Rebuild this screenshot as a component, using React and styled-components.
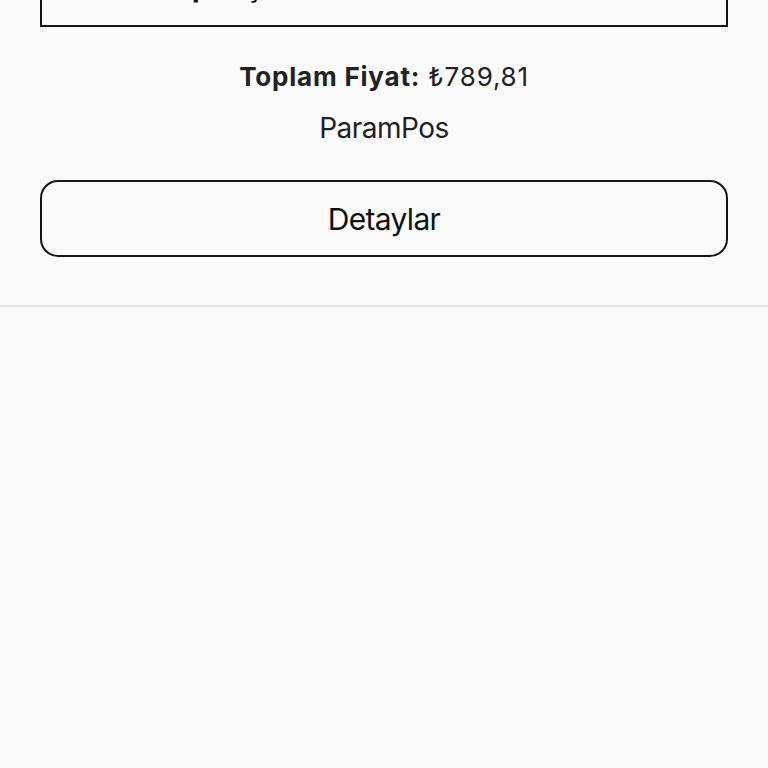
import React from "react";
import styled, { createGlobalStyle } from "styled-components";

const Global = createGlobalStyle`
  html, body {
    margin: 0;
    padding: 0;
    background: #fafafa;
    overflow: hidden;
  }
  body {
    font-family: Inter, "Noto Sans", "Liberation Sans", sans-serif;
    color: #1c1c1e;
  }
`;

const Page = styled.div`
  width: 768px;
  height: 768px;
  background: #fafafa;
  overflow: hidden;
`;

const Card = styled.section`
  display: flex;
  flex-direction: column;
  align-items: stretch;
  padding: 0 40px 48px;
  border-bottom: 2px solid #e2e2e2;
`;

const PaymentBox = styled.div`
  height: 60px;
  margin-top: -45px;
  border: 2px solid #141414;
  display: flex;
  align-items: center;
  padding: 0 0 8px 124px;
  font-size: 28px;
  font-weight: 700;
  line-height: 30px;
  color: #111;
`;

const Total = styled.div`
  margin-top: 34px;
  text-align: center;
  font-size: 26px;
  line-height: 32px;
  letter-spacing: 0.8px;
  color: #222;
`;

const TotalLabel = styled.span`
  font-weight: 700;
`;

const Provider = styled.div`
  margin-top: 19px;
  text-align: center;
  font-size: 28px;
  line-height: 32px;
  letter-spacing: -0.5px;
  color: #1f1f1f;
`;

const DetailsButton = styled.button`
  margin-top: 36px;
  height: 77px;
  border: 2px solid #161616;
  border-radius: 18px;
  background: transparent;
  font-family: inherit;
  font-size: 30px;
  letter-spacing: -0.7px;
  color: #111;
  cursor: pointer;
`;

export default function App() {
  return (
    <Page>
      <Global />
      <Card>
        <PaymentBox>Siparişi Tamamla</PaymentBox>
        <Total>
          <TotalLabel>Toplam Fiyat:</TotalLabel> ₺789,81
        </Total>
        <Provider>ParamPos</Provider>
        <DetailsButton>Detaylar</DetailsButton>
      </Card>
    </Page>
  );
}
